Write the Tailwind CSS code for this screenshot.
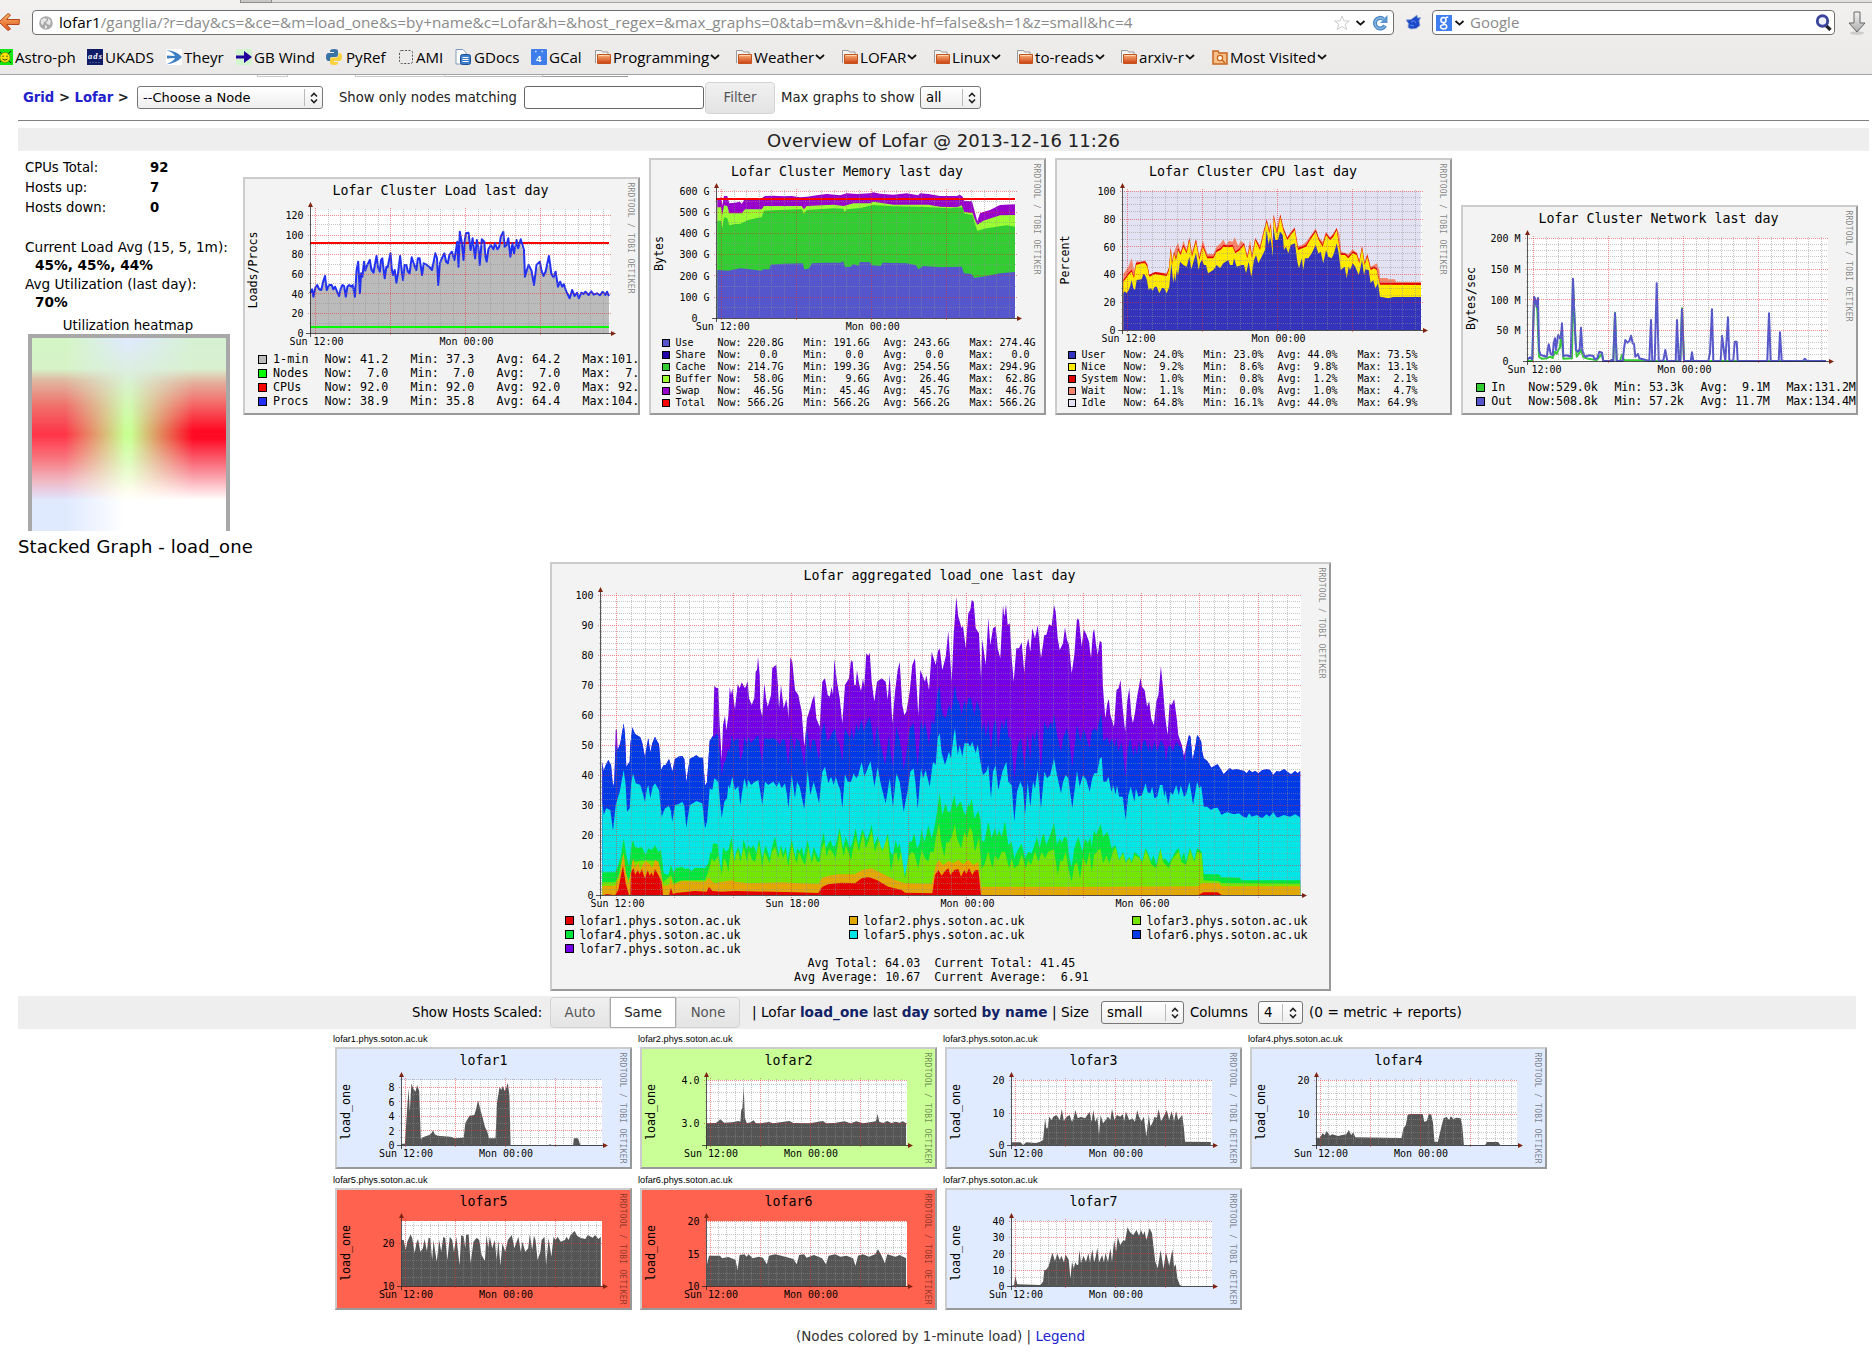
<!DOCTYPE html>
<html lang="en">
<head>
<meta charset="utf-8">
<title>Ganglia:: Lofar Cluster Report</title>
<script src="https://cdn.jsdelivr.net/npm/@tailwindcss/browser@4"></script>
</head>
<body class="w-[1872px] h-[1359px] overflow-hidden bg-white text-black text-[13.3px] leading-[17px] font-['DejaVu_Sans',sans-serif]">

<svg class="absolute w-0 h-0">
  <defs>
    <linearGradient id="fold" x1="0" y1="0" x2="0" y2="1"><stop offset="0" stop-color="#f8b27a"/><stop offset="1" stop-color="#cf3f10"/></linearGradient>
    <linearGradient id="back" x1="0" y1="0" x2="0" y2="1"><stop offset="0" stop-color="#f7b56c"/><stop offset="1" stop-color="#e2571c"/></linearGradient>
    <linearGradient id="down" x1="0" y1="0" x2="0" y2="1"><stop offset="0" stop-color="#f4f4f4"/><stop offset="1" stop-color="#aaa"/></linearGradient>
    <symbol id="folder" viewBox="0 0 16 16"><path d="M.5 14V1.500h6l1 1.500h5.500v2" fill="#f4f4f4" stroke="#9a9a9a"/><path d="M2.500 14.500v-9h13v9z" fill="url(#fold)" stroke="#c4541e"/><path d="M3.500 6.500h11" stroke="#fbd3ae"/></symbol>
    <symbol id="chev" viewBox="0 0 12 8"><path d="M2 2l4 3.600L10 2" fill="none" stroke="#111" stroke-width="1.800"/></symbol>
    <symbol id="updown" viewBox="0 0 8 12"><path d="M1 4.500L4 1.500 7 4.500M1 7.500l3 3 3-3" fill="none" stroke="#222" stroke-width="1.600"/></symbol>
  </defs>
</svg>

<!-- Browser toolbar -->
<header class="h-[75px] bg-gradient-to-b from-[#f2f1f0] to-[#ebe9e8] border-b border-[#a3a3a3] font-['Open_Sans','Noto_Sans',sans-serif]">
  <div class="flex h-[3px]">
    <div class="w-[240px]"></div>
    <div class="w-[32px] bg-[#c8c8c8] border-x border-b border-[#8b8b8b]"></div>
    <div class="flex-1 bg-[#e2e1e0] border-b border-[#a5a5a5]"></div>
  </div>
  <div class="flex h-[38px] pt-[7px]">
    <svg class="w-[21px] h-[20px] mt-[2px] mr-[11px] shrink-0" viewBox="0 0 21 20"><path d="M8 1.500L-1 10 8 18.500 10.500 17 6.500 12.500 19 12.500 19.500 7.500 6.500 7.500 10.500 3z" fill="url(#back)" stroke="#b5481a"/></svg>
    <div class="flex items-center w-[1362px] h-[25px] shrink-0 border border-[#6f6f6f] rounded-[4px] bg-white px-[6px]">
      <svg class="w-[14px] h-[14px] mr-[6px]" viewBox="0 0 14 14"><circle cx="7" cy="7" r="6.800" fill="#aaa"/><path d="M2 4l3-2 3 1-1 2-2 1-1 3-2-1zM9 2l3 3-1 4-3-1-1-2 2-1zM6 9l2 1v2l-2 1z" fill="#e6e6e6"/></svg>
      <span class="text-[15.3px] leading-[20px] text-[#8a8a8a] whitespace-nowrap pb-px"><span class="text-black">lofar1</span>/ganglia/?r=day&amp;cs=&amp;ce=&amp;m=load_one&amp;s=by+name&amp;c=Lofar&amp;h=&amp;host_regex=&amp;max_graphs=0&amp;tab=m&amp;vn=&amp;hide-hf=false&amp;sh=1&amp;z=small&amp;hc=4</span>
      <svg class="w-[16px] h-[16px] ml-auto" viewBox="0 0 16 16"><path d="M8 1l2 5h5.300l-4.200 3.300 1.600 5.200L8 11.400l-4.700 3.100 1.600-5.200L.700 6H6z" fill="#fff" stroke="#ccc"/></svg>
      <svg class="w-[13px] h-[8px] ml-[4px]"><use href="#chev"/></svg>
      <svg class="w-[16px] h-[16px] ml-[5px] -mr-[1px]" viewBox="0 0 16 16"><path d="M13 10.500A5.300 5.300 0 1 1 11.500 4" fill="none" stroke="#4b86c0" stroke-width="4"/><path d="M13 10.500A5.300 5.300 0 1 1 11.500 4" fill="none" stroke="#84b5e2" stroke-width="1.600"/><path d="M15.500 0V8H8z" fill="#5b95cd"/></svg>
    </div>
    <svg class="w-[16px] h-[16px] ml-[11px] mr-[11px] mt-[4px] shrink-0" viewBox="0 0 16 16"><path d="M1 6l5-.5L9.500 3 12 1l.5 3L15.500 3.500 14 7l1 4.500-4 3-5 .5-3-1.500 .5-4z" fill="#1b49c8" stroke="#8ea3d0" stroke-width=".8"/><path d="M6 8l3-1.500 2 2.500M5 11l4 1" stroke="#5e8bf5" fill="none"/></svg>
    <div class="flex items-center w-[403px] h-[25px] shrink-0 border border-[#6f6f6f] rounded-[4px] bg-white px-[3px]">
      <svg class="w-[16px] h-[16px]" viewBox="0 0 16 16"><rect width="16" height="16" fill="#3f7ef0"/><g fill="none" stroke="#fff" stroke-width="1.500"><circle cx="7.500" cy="5" r="2.600"/><path d="M10 2.300h2.200M8 7.700c-2 1 2.800 1.300 2.800 3.500 0 3.500-6.300 3.500-6.300.5 0-1.500 2-2.200 4-2"/></g></svg>
      <svg class="w-[13px] h-[8px] ml-[1px]"><use href="#chev"/></svg>
      <span class="ml-[4px] text-[15px] leading-[20px] pb-px text-[#8a8a8a]">Google</span>
      <svg class="w-[17px] h-[17px] ml-auto -mr-[1px]" viewBox="0 0 17 17"><path d="M10.500 11l5 5" stroke="#222" stroke-width="3.200"/><circle cx="7.500" cy="7" r="5.200" fill="#eef2fc" stroke="#3b459c" stroke-width="2.900"/></svg>
    </div>
    <svg class="w-[20px] h-[24px] ml-[12px] mt-[1px] shrink-0" viewBox="0 0 20 24"><ellipse cx="10" cy="22" rx="7" ry="1.700" fill="#ccc"/><path d="M7 1h6v11h5l-8 9-8-9h5z" fill="url(#down)" stroke="#666"/></svg>
  </div>
  <nav class="flex h-[32px] items-center text-[15.1px] whitespace-nowrap -ml-[3px] [&>a]:flex [&>a]:items-center [&>a]:shrink-0 [&>a>svg:first-child]:w-[16px] [&>a>svg:first-child]:h-[16px] [&>a>svg:first-child]:mr-[2px] [&_.c]:w-[12px] [&_.c]:h-[8px]">
    <a class="w-[90px]"><svg viewBox="0 0 16 16"><rect width="16" height="16" fill="#14e614"/><path d="M2 2l12 12M14 2L2 14" stroke="#222"/><circle cx="8" cy="8.500" r="5" fill="#ffe600" stroke="#7a6d00" stroke-width=".6"/><path d="M6 6.500v1.500M10 6.500v1.500M5.500 10q2.500 2.500 5 0" stroke="#333" fill="none"/></svg><span>Astro-ph</span></a>
    <a class="w-[79px]"><svg viewBox="0 0 16 16"><rect width="16" height="16" fill="#111c66"/><text x="1" y="9.500" font-family="Liberation Serif" font-size="8.500" font-style="italic" font-weight="bold" fill="#fff" textLength="14">ads</text><path d="M2 13.500h12" stroke="#42508c" stroke-dasharray="2 1"/></svg><span>UKADS</span></a>
    <a class="w-[70px]"><svg viewBox="0 0 16 16"><rect width="16" height="16" fill="#fff"/><path d="M0 1q11 1 16 7-5 6-16 7.500Q8 12 9 9L1 9.500v-3L9 7Q7 3 0 1z" fill="#3d7fc4"/></svg><span>Theyr</span></a>
    <a class="w-[90px]"><svg viewBox="0 0 16 16"><rect width="16" height="16" fill="#d2f5cf"/><path d="M0 6.500h8V2l8 6-8 6V9.500H0z" fill="#22009c"/></svg><span>GB Wind</span></a>
    <a class="w-[72px]"><svg viewBox="0 0 16 16"><path d="M8 0c3 0 4 .7 4 2.500V6q0 2-2 2H6Q4 8 4 10v2H2.500Q0 12 0 8t2.500-4H8V3H4V2q0-2 4-2z" fill="#3b72a5"/><path d="M8 16c-3 0-4-.7-4-2.500V10.500q0-2 2-2h4q2.500 0 2.500-2.500V4h1Q16 4 16 8t-2.500 4H8v1h4v1q0 2-4 2z" fill="#fcd13e"/></svg><span class="ml-[2px]">PyRef</span></a>
    <a class="w-[57px]"><svg viewBox="0 0 16 16"><rect x="1.500" y="1.500" width="13" height="13" rx="2" fill="none" stroke="#555" stroke-dasharray="2 1.500"/></svg><span>AMI</span></a>
    <a class="w-[76px]"><svg viewBox="0 0 16 16"><path d="M1 .5h7l3 3V15H1z" fill="#fff" stroke="#7f9ab8"/><rect x="5.500" y="5.500" width="10" height="10" rx="2" fill="#3c7ecb" stroke="#1d4f95"/><path d="M7.500 8.500h6M7.500 10.500h6M7.500 12.500h6" stroke="#fff"/></svg><span class="ml-[1px]">GDocs</span></a>
    <a class="w-[64px]"><svg viewBox="0 0 16 16"><rect width="16" height="16" rx="1" fill="#3f7eea"/><path d="M4 2.500h1.500M10.500 2.500H12" stroke="#cfe0ff" stroke-width="1.500"/><text x="5" y="13" font-family="Liberation Sans" font-size="9.500" font-weight="bold" fill="#fff">4</text></svg><span>GCal</span></a>
    <a class="w-[141px]"><svg><use href="#folder"/></svg><span>Programming</span><svg class="c"><use href="#chev"/></svg></a>
    <a class="w-[106px]"><svg><use href="#folder"/></svg><span>Weather</span><svg class="c"><use href="#chev"/></svg></a>
    <a class="w-[92px]"><svg><use href="#folder"/></svg><span>LOFAR</span><svg class="c"><use href="#chev"/></svg></a>
    <a class="w-[83px]"><svg><use href="#folder"/></svg><span>Linux</span><svg class="c"><use href="#chev"/></svg></a>
    <a class="w-[104px]"><svg><use href="#folder"/></svg><span>to-reads</span><svg class="c"><use href="#chev"/></svg></a>
    <a class="w-[91px]"><svg><use href="#folder"/></svg><span>arxiv-r</span><svg class="c"><use href="#chev"/></svg></a>
    <a class="w-[120px]"><svg viewBox="0 0 16 16"><path d="M1 15V2h5l1 2h8v11z" fill="#f7c08a" stroke="#c8661e" stroke-width="1.500"/><circle cx="8" cy="9" r="2.600" fill="#fff" stroke="#c8661e" stroke-width="1.300"/><path d="M10 11l3 3" stroke="#c8661e" stroke-width="1.500"/></svg><span>Most Visited</span><svg class="c"><use href="#chev"/></svg></a>
  </nav>
</header>

<main class="pl-[18px]">
  <!-- Lower edges of controls scrolled under the toolbar -->
  <div class="flex h-[2px] pl-[239px]">
    <div class="w-[31px] border-x border-b border-[#ccc]"></div><div class="w-[67px]"></div>
    <div class="w-[90px] border-x border-b border-[#ccc]"></div><div class="w-[98px] border-b border-r border-[#bbb]"></div><div class="w-[85px] border-b border-[#999]"></div>
  </div>

  <!-- Filter row -->
  <div class="flex items-center h-[41px] mb-[2px] pl-[5px] text-[#222] whitespace-nowrap">
    <div class="w-[114px] font-bold text-[13.2px] word-spacing"><span class="text-[#2222cc]">Grid</span> &gt; <span class="text-[#2222cc]">Lofar</span> &gt;</div>
    <div class="flex items-center w-[186px] h-[23px] border border-[#777] rounded-[3px] bg-gradient-to-b from-white to-[#eee] pl-[5px] text-black"><span class="text-[13px]">--Choose a Node</span><div class="ml-auto h-[17px] w-[18px] border-l border-[#bbb] flex items-center justify-center"><svg class="w-[8px] h-[12px]"><use href="#updown"/></svg></div></div>
    <span class="w-[185px] pl-[16px] text-[13.2px]">Show only nodes matching</span>
    <div class="ml-[16px] w-[180px] h-[23px] border border-[#666] rounded-[3px] bg-white"></div>
    <div class="ml-[1px] w-[70px] h-[32px] border border-[#d3d3d3] rounded-[4px] bg-gradient-to-b from-[#f0f0f0] to-[#e4e4e4] text-[#555] flex items-center justify-center">Filter</div>
    <span class="w-[140px] pl-[6px]">Max graphs to show</span>
    <div class="flex items-center w-[61px] h-[23px] border border-[#777] rounded-[3px] bg-gradient-to-b from-white to-[#eee] ml-[5px] pl-[5px] text-black"><span>all</span><div class="ml-auto h-[17px] w-[18px] border-l border-[#bbb] flex items-center justify-center"><svg class="w-[8px] h-[12px]"><use href="#updown"/></svg></div></div>
  </div>
  <div class="w-[1851px] h-px bg-[#808080]"></div>
  <h1 class="w-[1851px] h-[23px] mt-[7px] bg-[#eee] text-[18px] tracking-[0.06px] leading-[25px] text-center text-[#222]">Overview of Lofar @ 2013-12-16 11:26</h1>

  <!-- Summary and cluster graphs -->
  <section class="flex h-[380px] pt-[7px]">
    <div class="w-[225px] shrink-0 pl-[7px] whitespace-nowrap">
      <div class="grid grid-cols-[125px_1fr] auto-rows-[20px] leading-[19px] text-[13.2px]">
        <span>CPUs Total:</span><b>92</b><span>Hosts up:</span><b>7</b><span>Hosts down:</span><b>0</b>
      </div>
      <div class="mt-[20px] leading-[18px] h-[19px] text-[13.65px]">Current Load Avg (15, 5, 1m):</div>
      <div class="pl-[10px] font-bold leading-[16px] h-[17px] text-[13.65px]">45%, 45%, 44%</div>
      <div class="leading-[20px] text-[13.65px]">Avg Utilization (last day):</div>
      <div class="pl-[10px] font-bold leading-[16px] h-[17px] text-[13.65px]">70%</div>
      <div class="mt-[7px] w-[206px] text-center leading-[16px]">Utilization heatmap</div>
      <div class="ml-[3px] w-[202px] h-[197px] border-4 border-b-0 border-[#a8a8a8] relative bg-[linear-gradient(to_bottom,#e0eaff_0%,#dceee0_17%,#d4f6b8_32%,#c8ff90_50%,#e0fbc0_65%,#fffef0_80%,#fff_85%)]">
        <div class="absolute inset-0 bg-[linear-gradient(to_bottom,#d3f6c4_0%,#d6f3c8_16%,#e0b8a0_22%,#f0706c_35%,#ff3347_50%,#f87880_63%,#f0b8c4_74%,#e4dcf4_82%,#dfeaff_84%,#dfeaff_100%)] [mask-image:linear-gradient(to_right,#000_0%,#000_17%,#0000_48%)]"></div>
        <div class="absolute inset-0 bg-[linear-gradient(to_bottom,#d5f1d2_0%,#d9f0d0_16%,#e4b09c_23%,#f46a68_34%,#ff0a24_48%,#ff0a24_52%,#fa5868_62%,#f99aa4_71%,#ffe0e4_80%,#fff_84%)] [mask-image:linear-gradient(to_left,#000_0%,#000_17%,#0000_49%)]"></div>
      </div>
    </div>
    <div class="flex items-end gap-[9px] h-[257px]" id="cluster"></div>
  </section>

  <h2 class="text-[18px] tracking-[0.14px] leading-[22px] h-[31px] pt-[5px]">Stacked Graph - load_one</h2>
  <div class="pl-[532px] h-[429px]" id="stacked"></div>

  <!-- Host graph controls -->
  <div class="flex items-center w-[1838px] h-[33px] mt-[5px] pl-[394px] bg-[#eee] whitespace-nowrap">
    <span class="w-[138px]">Show Hosts Scaled:</span>
    <div class="flex h-[31px] text-[#555] [&>div]:flex [&>div]:items-center [&>div]:justify-center [&>div]:border">
      <div class="w-[60px] border-[#d3d3d3] rounded-l-[4px] bg-gradient-to-b from-[#f0f0f0] to-[#e4e4e4]">Auto</div>
      <div class="w-[66px] border-[#aaa] bg-white text-[#222]">Same</div>
      <div class="w-[64px] border-[#d3d3d3] rounded-r-[4px] bg-gradient-to-b from-[#f0f0f0] to-[#e4e4e4]">None</div>
    </div>
    <span class="w-[361px] pl-[12px] text-[13.7px]">| Lofar <b class="text-[#112266]">load_one</b> last <b class="text-[#112266]">day</b> sorted <b class="text-[#112266]">by name</b> | Size</span>
    <div class="flex items-center w-[83px] h-[23px] border border-[#777] rounded-[3px] bg-gradient-to-b from-white to-[#eee] pl-[5px]"><span>small</span><div class="ml-auto h-[17px] w-[18px] border-l border-[#bbb] flex items-center justify-center"><svg class="w-[8px] h-[12px]"><use href="#updown"/></svg></div></div>
    <span class="w-[74px] pl-[6px]">Columns</span>
    <div class="flex items-center w-[45px] h-[23px] border border-[#777] rounded-[3px] bg-gradient-to-b from-white to-[#eee] pl-[5px]"><span>4</span><div class="ml-auto h-[17px] w-[20px] border-l border-[#bbb] flex items-center justify-center"><svg class="w-[8px] h-[12px]"><use href="#updown"/></svg></div></div>
    <span class="pl-[6px] text-[13.7px]">(0 = metric + reports)</span>
  </div>

  <div class="grid grid-cols-[repeat(4,305px)] auto-rows-[141px] pl-[315px] pt-[4px] h-[293px]" id="hosts"></div>
  <footer class="text-[#333] pl-[778px] pt-[6px] text-[13.5px] whitespace-nowrap">(Nodes colored by 1-minute load) | <span class="text-[#2222cc]">Legend</span></footer>
</main>

<script>
const MONO = "'DejaVu Sans Mono', monospace";
const t = (x, y, s, adv, size, opt = '') =>
  `<text x="${x}" y="${y}" font-size="${size}" textLength="${(s.length * adv).toFixed(1)}" ${opt}>${s.replace(/ /g, '\u00a0')}</text>`;

// Sampled series: "x,y x,y ..." in a sample grid with origin (ox, oy) and kx/ky samples per pixel.
const pts = (s, ox, oy, kx = 3, ky = 3, dy = 0) => s.trim().split(/\s+/).map(p => {
  const [a, b] = p.split(',').map(Number);
  return [+(ox + a / kx).toFixed(1), +(oy + b / ky + dy).toFixed(1)];
});
const area = (p, base, fill) => `<polygon fill="${fill}" points="${p[0][0]},${base} ${p.join(' ')} ${p[p.length - 1][0]},${base}"/>`;
const line = (p, color, w = 2) => `<polyline fill="none" stroke="${color}" stroke-width="${w}" stroke-linejoin="round" points="${p.join(' ')}"/>`;

// card: box [x,y,w,h]; plot: x0, x1, top, base; ticks: [y, label]; vertical grid from gx with major/minor steps
function graph(c) {
  const [x, y, w, h] = c.box, {x0, x1, top, base} = c;
  let g = `<rect x="${x}" y="${y}" width="${w}" height="${h}" fill="${c.bg || '#f3f3f3'}"/>`;
  g += `<rect x="${x0}" y="${top}" width="${x1 - x0 + 1}" height="${base - top}" fill="#fff"/>` + c.draw;
  const n = Math.round(c.major / c.minor);
  let mn = '', mj = '';
  for (let k = -2; ; k++) {
    const gx = c.gx + k * c.minor;
    if (gx > x1) break;
    if (gx < x0 + 1) continue;
    const px = Math.floor(gx) + .5;
    if (k % n === 0) mj += `M${px} ${top - 2}V${base + 3}`; else mn += `M${px} ${top - 1}V${base + 1}`;
  }
  for (let gy = base - c.hminor; gy > top - 1; gy -= c.hminor) {
    if (c.ticks.some(k => Math.abs(k[0] - gy) < 1.5)) continue;
    mn += `M${x0 - 1} ${Math.floor(gy) + .5}H${x1 + 1}`;
  }
  c.ticks.forEach(([ty]) => { if (ty < base - 1) mj += `M${x0 - 2} ${Math.floor(ty) + .5}H${x1 + 2}`; });
  g += `<path d="${mn}" stroke="#8f8f8f" stroke-opacity=".5" stroke-dasharray="1 1" fill="none"/>`;
  g += `<path d="${mj}" stroke="#e03030" stroke-opacity=".55" stroke-dasharray="1 1" fill="none"/>`;
  g += `<path d="M${x0 + .5} ${top - 3}V${base + 4}M${x0 - 4} ${base + .5}H${x1 + 4}" stroke="#1f1f1f" stroke-opacity=".75" fill="none"/>`;
  g += `<path d="M${x0 - 2} ${top - 3}h5l-2.500-5zM${x1 + 2} ${base - 2}v5l5-2.500z" fill="#802411"/>`;
  c.ticks.forEach(([ty, l]) => { if (l) g += t(x0 - 6.5 - l.length * 6, ty + 3.7, l, 6, 10); });
  c.times.forEach(([tx, l]) => { g += t(tx + 1 - l.length * 3, base + 12, l, 6, 10); });
  g += t(x + w / 2 - c.title.length * 4 + (c.tdx || 0), y + 18, c.title, 8, 13.3);
  if (c.ylab) g += `<g transform="translate(${c.ylab[0]} ${c.ylab[1]}) rotate(-90)">${t(-c.ylab[2].length * 3.500, 0, c.ylab[2], 7, 11.7)}</g>`;
  g += `<g transform="translate(${x + w - 12.5} ${y + 5.500}) rotate(90)" fill="#000" fill-opacity=".48">${t(0, 0, 'RRDTOOL / TOBI OETIKER', 5.050, 8)}</g>`;
  g += c.extra || '';
  g += `<path d="M${x} ${y + h}V${y}H${x + w}L${x + w - 2} ${y + 2}H${x + 2}V${y + h - 2}z" fill="#ccc"/><path d="M${x} ${y + h}H${x + w}V${y}L${x + w - 2} ${y + 2}V${y + h - 2}H${x + 2}z" fill="#999"/>`;
  return `<svg class="block shrink-0" width="${w}" height="${h}" viewBox="${x} ${y} ${w} ${h}" font-family="${MONO}">${g}</svg>`;
}
const swatch = (x, y, s, c) => `<rect x="${x + .5}" y="${y + .5}" width="${s - 1}" height="${s - 1}" fill="${c}" stroke="#000"/>`;
const legend = (rows, y, step, sx, nx, cols, adv, size, ss) => rows.map((r, i) =>
  swatch(sx, y + i * step - ss + 1, ss, r[0]) + t(nx, y + i * step, r[1], adv, size) +
  cols.map((cx, j) => t(cx, y + i * step, r[2 + j], adv, size)).join('')).join('');
const DAY = (gx, p) => [[gx, 'Sun 12:00'], [gx + p, 'Mon 00:00']];

// --- Cluster load
const load = pts(`748,430 753,418 756,440 761,412 765,405 770,418 775,420 780,392 784,378 788,420 794,405 800,405 804,418 808,410 813,425 818,438 822,415 826,405 830,408 834,440 838,410 842,405 848,410 851,405 856,440 860,360 864,335 868,430 871,370 874,380 878,335 881,362 884,350 892,330 896,360 901,368 908,318 912,352 916,365 919,330 922,325 928,385 932,350 935,352 942,310 945,358 948,375 952,360 956,398 960,370 965,318 969,360 972,390 976,345 980,345 984,365 988,370 993,322 999,345 1004,360 1008,325 1012,325 1018,375 1022,340 1030,345 1036,352 1042,360 1050,310 1054,325 1057,405 1061,340 1064,330 1072,310 1076,335 1080,340 1084,315 1090,305 1096,330 1103,275 1106,350 1109,245 1114,280 1118,330 1121,270 1124,250 1130,248 1135,300 1140,265 1146,325 1150,270 1154,292 1157,345 1162,268 1168,275 1171,320 1174,335 1178,298 1184,285 1190,298 1194,280 1200,298 1204,290 1208,260 1214,245 1217,290 1222,285 1226,265 1231,320 1236,280 1240,310 1246,270 1250,295 1256,268 1264,300 1266,380 1271,360 1275,345 1282,362 1288,405 1294,345 1302,335 1306,362 1311,378 1316,365 1324,318 1330,372 1335,382 1340,365 1346,410 1351,395 1356,410 1360,402 1366,425 1374,445 1380,420 1386,438 1392,428 1396,445 1402,428 1408,432 1412,425 1420,435 1426,424 1432,434 1440,430 1447,436 1454,425 1460,435 1464,425 1469,438`, 0, 150, 2.412);
const lt = v => 333.3 - v * .983;
const gLoad = graph({box: [243, 177, 397, 238], x0: 310, x1: 609, top: 210, base: 333, gx: 315.5, major: 75, minor: 12.5, hminor: 9.83,
  ticks: [0, 20, 40, 60, 80, 100, 120].map(v => [lt(v), '' + v]), times: DAY(315.5, 150), title: 'Lofar Cluster Load last day', tdx: -1,
  ylab: [257, 270, 'Loads/Procs'],
  draw: area(load.map((p, i) => [p[0], (p[1] * 2 + load[Math.max(0, i - 1)][1] + load[Math.min(load.length - 1, i + 1)][1]) / 4]), 333, '#bbb') +
    `<path d="M310 327H609" stroke="#0f0" stroke-width="2"/><path d="M310 243H609" stroke="red" stroke-width="2"/>` + line(load, '#2030f4', 2),
  extra: legend([['#bbb', '1-min', 'Now: 41.2', 'Min: 37.3', 'Avg: 64.2', 'Max:101.7'], ['#0f0', 'Nodes', 'Now:  7.0', 'Min:  7.0', 'Avg:  7.0', 'Max:  7.0'], ['#f00', 'CPUs', 'Now: 92.0', 'Min: 92.0', 'Avg: 92.0', 'Max: 92.0'], ['#2030f4', 'Procs', 'Now: 38.9', 'Min: 35.8', 'Avg: 64.4', 'Max:104.3']],
    363, 14, 258, 273, [324.5, 410.5, 496.5, 582.5], 7.1, 11.7, 9)});

// --- Cluster memory
const m = s => pts(s, 640, 150);
const gMem = graph({box: [649, 158, 397, 257], x0: 716, x1: 1015, top: 191, base: 318, gx: 721.7, major: 75, minor: 12.5, hminor: 10.6,
  ticks: [0, 1, 2, 3, 4, 5, 6].map(v => [318.3 - v * 21.17, v ? v + '00 G' : '0  ']), times: DAY(721.7, 150), title: 'Lofar Cluster Memory last day', tdx: -.5,
  ylab: [663, 253.5, 'Bytes'],
  draw: area(m('232,150 243,142 247,165 252,138 262,138 268,160 285,158 300,155 305,162 312,150 330,148 365,145 375,138 400,137 430,139 455,138 480,142 500,140 530,136 560,132 600,136 620,130 650,132 690,130 700,127 720,131 760,134 800,130 835,136 840,130 865,132 900,138 950,138 960,134 968,140 972,152 996,154 1003,180 1012,214 1020,190 1030,186 1050,180 1080,165 1125,163'), 318, '#9900cc') +
    area(m('232,172 243,172 247,195 252,166 262,168 268,190 305,190 315,178 365,178 372,168 485,168 492,178 500,168 580,164 612,168 640,160 690,160 700,155 760,164 865,164 900,170 950,172 965,166 972,185 998,190 1003,205 1012,224 1030,212 1080,196 1125,195'), 318, '#99ff33') +
    area(m('232,212 243,212 247,235 252,202 262,205 268,226 285,222 300,222 325,210 350,204 365,202 372,182 410,180 485,178 492,192 500,180 580,175 610,176 614,186 620,178 660,174 700,165 760,169 830,170 870,172 930,175 968,172 972,190 998,196 1003,215 1012,242 1040,235 1070,230 1100,226 1125,230'), 318, '#33cc33') +
    area(m('232,360 265,362 300,355 330,358 365,362 370,358 388,358 392,344 430,341 488,340 493,358 505,356 512,348 515,340 560,338 600,338 610,334 615,352 632,350 640,342 655,348 660,336 690,337 695,346 722,348 728,338 800,340 828,346 835,358 850,348 900,352 965,350 972,370 995,372 1003,384 1040,378 1080,370 1125,366'), 318, '#5555cc') +
    '<path d="M716 199H1015" stroke="red" stroke-width="2"/>',
  extra: legend([['#5555cc', 'Use', 'Now: 220.8G', 'Min: 191.6G', 'Avg: 243.6G', 'Max: 274.4G'], ['#2200aa', 'Share', 'Now:   0.0 ', 'Min:   0.0 ', 'Avg:   0.0 ', 'Max:   0.0 '], ['#33cc33', 'Cache', 'Now: 214.7G', 'Min: 199.3G', 'Avg: 254.5G', 'Max: 294.9G'], ['#99ff33', 'Buffer', 'Now:  58.0G', 'Min:   9.6G', 'Avg:  26.4G', 'Max:  62.8G'], ['#9900cc', 'Swap', 'Now:  46.5G', 'Min:  45.4G', 'Avg:  45.7G', 'Max:  46.7G'], ['#ff0000', 'Total', 'Now: 566.2G', 'Min: 566.2G', 'Avg: 566.2G', 'Max: 566.2G']],
    346, 12, 662, 675.500, [717.5, 803.5, 883.5, 969.5], 6, 10, 8)});

// --- Cluster CPU
const nice = '220,395 228,385 235,375 240,370 245,365 252,385 258,345 275,340 285,340 292,350 298,380 315,372 350,378 357,360 362,300 366,345 372,310 378,330 384,300 392,315 400,290 410,310 418,270 426,320 438,275 448,330 458,290 472,325 490,325 500,305 512,300 520,290 535,292 548,290 556,310 570,300 582,285 592,325 600,290 606,325 616,270 630,300 640,255 650,215 658,250 662,230 668,290 671,200 680,250 685,235 691,200 700,240 712,270 722,255 734,240 744,300 756,295 768,290 780,270 797,245 806,270 818,290 828,255 840,270 850,260 860,240 868,290 872,315 885,315 895,325 908,310 920,315 928,340 936,295 944,345 952,320 962,360 972,355 980,360 990,404 1113,405';
const cp = (s, dy = 0) => pts(s, 1050, 150, 3, 3, dy);
const gCpu = graph({box: [1055, 158, 397, 257], x0: 1122, x1: 1421, top: 191, base: 330, gx: 1127.5, major: 75, minor: 12.5, hminor: 6.95,
  ticks: [0, 20, 40, 60, 80, 100].map(v => [330.3 - v * 1.39, '' + v]), times: DAY(1127.5, 150), title: 'Lofar Cluster CPU last day', tdx: -.5,
  ylab: [1069, 260, 'Percent'],
  draw: '<rect x="1123" y="191" width="298" height="139" fill="#e2e2f2"/>' +
    area(cp('220,372 235,350 245,325 252,360 260,332 275,338 285,330 292,342 298,376 320,366 350,370 357,350 362,290 368,330 374,300 384,278 392,305 400,272 410,298 418,262 426,305 438,266 448,318 458,270 472,312 490,312 500,290 512,280 520,268 528,285 537,272 548,275 554,262 565,288 572,272 582,280 592,315 600,270 606,310 616,264 630,285 640,245 650,208 658,235 662,215 668,280 671,192 680,235 691,192 700,230 712,262 722,245 734,232 744,288 756,285 768,276 780,260 797,235 806,262 818,275 828,245 840,262 850,250 860,234 868,252 874,305 895,312 908,298 920,308 928,330 936,288 944,335 952,310 962,350 972,345 980,340 988,360 990,384 1012,384 1015,388 1035,388 1038,396 1113,396'), 330, '#f4856a') +
    area(cp(nice, -1.9), 330, '#e20000') + area(cp(nice), 330, '#ffea00') +
    area(cp('220,430 224,424 230,430 235,422 240,410 245,390 250,415 255,420 260,390 275,388 280,372 285,376 290,388 296,420 302,415 308,422 314,410 320,410 328,430 336,414 342,414 350,430 358,410 364,340 370,400 373,372 376,395 380,360 384,375 390,335 400,345 410,350 418,320 424,358 438,310 446,360 450,340 456,330 462,345 468,345 474,370 490,360 500,345 510,355 520,340 535,330 540,345 548,345 552,325 560,350 575,345 582,345 588,370 596,335 604,380 612,330 618,315 625,340 635,320 640,310 645,300 650,240 656,285 660,260 664,280 668,320 670,230 676,270 684,270 690,245 698,255 702,300 708,290 715,310 722,285 735,280 742,335 747,355 755,325 760,360 765,325 775,325 785,310 797,285 805,310 812,305 820,340 828,300 835,320 845,325 852,310 860,280 866,310 872,360 884,350 890,385 896,350 900,360 908,340 916,350 926,375 930,360 936,330 942,375 946,358 956,360 962,400 970,390 976,415 984,400 990,440 1015,445 1030,441 1113,441'), 330, '#3333bb'),
  extra: legend([['#3333bb', 'User', 'Now: 24.0%', 'Min: 23.0%', 'Avg: 44.0%', 'Max: 73.5%'], ['#ffea00', 'Nice', 'Now:  9.2%', 'Min:  8.6%', 'Avg:  9.8%', 'Max: 13.1%'], ['#dd0000', 'System', 'Now:  1.0%', 'Min:  0.8%', 'Avg:  1.2%', 'Max:  2.1%'], ['#f4856a', 'Wait', 'Now:  1.1%', 'Min:  0.0%', 'Avg:  1.0%', 'Max:  4.7%'], ['#e2e2f2', 'Idle', 'Now: 64.8%', 'Min: 16.1%', 'Avg: 44.0%', 'Max: 64.9%']],
    358, 12, 1068, 1081.5, [1123.5, 1203.5, 1277.5, 1357.5], 6, 10, 8)});

// --- Cluster network
const nw = s => pts(s, 1450, 150);
const gNet = graph({box: [1461, 205, 397, 210], x0: 1527, x1: 1827, top: 238, base: 361, gx: 1533.5, major: 75, minor: 12.5, hminor: 6.15,
  ticks: [0, 50, 100, 150, 200].map(v => [361.3 - v * .615, v ? v + ' M' : '0  ']), times: DAY(1533.5, 150), title: 'Lofar Cluster Network last day', tdx: -1,
  ylab: [1475, 298.500, 'Bytes/sec'],
  draw: line(nw('233,632 247,632 252,450 257,455 262,480 267,620 275,626 290,625 300,620 308,624 315,605 320,612 325,600 330,592 334,545 340,626 366,625 369,400 376,560 380,620 386,612 393,600 400,622 415,626 440,630 455,612 460,633 490,633 495,488 500,633 510,633 516,614 522,630 580,631 598,633 691,633 696,475 702,633 1128,633'), '#33cc33', 2) +
    line(nw('233,628 240,622 247,628 252,440 256,448 260,470 264,444 267,600 272,615 290,620 296,583 302,612 308,615 311,580 315,565 318,600 322,570 325,555 330,565 333,560 336,520 340,618 350,616 362,620 366,480 369,386 373,490 378,600 384,605 389,598 393,533 397,600 402,614 406,620 418,616 430,618 434,628 442,625 448,605 456,608 460,633 480,633 484,630 490,633 495,490 500,633 518,633 523,590 526,570 532,578 538,574 543,557 548,580 552,582 556,620 564,612 568,625 598,633 603,510 607,633 614,632 620,400 626,632 640,632 646,600 652,633 677,633 681,510 686,633 691,633 696,478 702,633 722,633 726,607 730,633 775,633 780,608 786,478 790,633 812,632 816,557 822,605 826,632 834,502 838,632 850,632 854,575 860,575 863,633 952,633 957,490 962,633 986,633 990,547 995,633 1060,632 1064,626 1070,632 1128,633'), '#5555cc', 2),
  extra: legend([['#33cc33', 'In', 'Now:529.0k', 'Min: 53.3k', 'Avg:  9.1M', 'Max:131.2M'], ['#5555cc', 'Out', 'Now:508.8k', 'Min: 57.2k', 'Avg: 11.7M', 'Max:134.4M']],
    391, 14, 1476, 1491.3, [1528.3, 1614.4, 1700.4, 1786.4], 6.95, 11.7, 9)});
document.getElementById('cluster').innerHTML = gLoad + gMem + gCpu + gNet;

// --- Stacked graph: first part sampled at 3/px, tail at 1.96/px
const st = (a, b) => [...pts(a, 595, 585), ...pts(b, 540, 555, 1.96)];
const tail = '1272,540 1275,545 1279,615 1284,580 1288,540 1292,548 1296,560 1298,590 1301,610 1308,618 1316,638 1322,632 1328,628 1333,640 1340,658 1346,648 1352,640 1358,645 1365,642 1372,645 1380,648 1385,655 1390,645 1396,652 1402,648 1408,655 1416,645 1425,643 1431,645 1437,660 1444,648 1450,650 1458,642 1465,650 1472,658 1480,648 1485,655 1490,648';
const start = '22,530 26,560 30,545 40,525 48,540 54,605 58,590 ';
const low = '76,475 86,415 90,450 94,545 104,530 106,480 112,427 120,447 136,457 142,475 150,517 156,480 160,460 166,502 172,475 180,455 186,468 192,478 198,555 206,540 212,540 222,522 226,535 232,560 240,522 250,515 262,513 268,522 274,592 284,522 296,515 304,511 314,518 324,518 330,602 336,592 344,467 354,452 ';
const purple = st(start + '62,435 65,432 68,495 ' + low + '358,302 363,308 370,310 374,420 380,525 384,420 390,392 394,435 400,395 404,305 408,330 412,310 416,345 420,372 428,297 434,310 440,292 450,310 454,300 458,288 462,340 470,360 478,340 482,260 486,255 489,215 494,270 496,370 502,395 508,295 514,345 518,365 528,330 532,248 544,240 548,290 552,370 558,300 566,370 574,342 578,370 580,402 586,217 592,230 600,315 610,330 620,380 628,485 636,400 646,370 652,345 658,330 664,400 674,425 682,290 690,280 698,330 704,335 710,305 714,330 718,222 726,290 734,340 742,415 750,300 762,280 768,225 773,230 778,300 782,300 786,255 792,295 798,318 804,280 808,305 814,205 820,212 824,203 830,290 838,350 846,290 860,280 872,290 878,345 884,268 892,415 900,320 908,255 914,230 922,360 928,390 934,380 944,320 952,240 960,220 970,390 976,255 990,290 994,270 1002,315 1010,200 1022,240 1028,200 1034,190 1042,255 1052,215 1060,138 1064,200 1070,290 1076,150 1084,35 1090,95 1100,130 1104,122 1112,190 1120,85 1126,75 1130,45 1136,50 1142,130 1152,145 1158,280 1162,163 1172,240 1180,98 1186,180 1194,130 1202,124 1208,190 1216,220 1224,60 1228,95 1233,58 1238,120 1244,115 1250,220 1256,290 1264,190 1272,190 1280,172 1288,265 1294,185 1300,160 1306,200 1312,130 1320,160 1328,120 1338,220 1348,150 1354,150 1362,118 1370,122 1377,60 1382,80 1388,160 1394,195 1404,175 1410,127 1416,165 1422,180 1430,265 1438,210 1446,100 1452,105 1460,185 1466,133 1474,148 1482,170 1488,220 1494,140', '1086,222 1090,270 1093,300 1097,258 1101,262 1103,390 1108,490 1112,445 1115,432 1118,480 1125,515 1130,405 1134,400 1138,375 1142,460 1147,530 1151,440 1155,398 1159,480 1162,505 1166,475 1170,430 1177,368 1180,395 1185,405 1190,455 1194,438 1198,490 1203,510 1208,440 1212,420 1217,333 1221,400 1225,480 1230,540 1234,445 1238,450 1243,432 1248,490 1251,540 1258,570 1262,602 1267,570 ' + tail);
const blue = st(start + '62,480 68,495 ' + low + '358,460 364,445 370,455 376,520 380,570 386,535 392,525 400,490 404,500 410,450 416,470 422,465 430,460 436,530 444,500 448,455 456,480 460,455 468,475 480,460 490,450 496,500 502,535 508,460 520,462 535,460 545,465 555,480 562,462 570,465 580,540 588,440 598,500 604,460 614,470 622,510 628,545 636,430 646,500 652,465 660,465 672,525 680,440 688,412 696,470 705,460 710,445 720,430 726,465 734,480 742,530 750,430 760,450 766,460 770,430 776,470 784,415 790,440 800,402 806,440 812,420 824,395 832,440 838,490 846,420 856,475 862,500 870,540 882,450 888,510 894,545 904,425 912,455 920,500 926,555 936,490 944,430 956,415 962,480 968,545 978,405 984,435 990,412 1002,480 1010,405 1018,420 1026,330 1034,302 1038,365 1044,390 1052,400 1062,360 1070,380 1080,298 1086,345 1092,350 1100,390 1108,345 1114,370 1120,340 1128,340 1138,390 1146,345 1156,380 1160,440 1168,410 1172,460 1180,405 1188,500 1194,430 1202,400 1210,490 1220,405 1226,435 1234,395 1240,455 1248,460 1258,585 1268,480 1278,460 1284,510 1288,550 1298,445 1306,525 1312,445 1320,470 1326,428 1332,490 1338,550 1348,410 1358,435 1368,410 1372,430 1377,385 1386,450 1398,500 1404,460 1416,430 1422,460 1432,545 1446,418 1456,470 1466,430 1474,460 1484,490 1490,440 1498,430', '1092,530 1096,500 1100,473 1104,560 1112,545 1116,570 1121,548 1126,575 1130,548 1133,590 1140,560 1143,600 1148,665 1152,580 1157,550 1163,605 1166,570 1170,600 1174,558 1178,590 1182,560 1187,555 1192,590 1195,560 1199,590 1204,558 1210,590 1217,555 1224,575 1227,620 1231,575 1236,570 1240,590 1247,560 1252,570 1258,580 1263,620 1268,575 ' + tail);
const cyan = st('22,650 26,690 34,670 46,675 54,738 62,660 74,620 86,555 92,600 96,680 104,670 108,600 114,565 122,595 136,600 143,625 150,650 156,610 160,600 166,640 173,605 180,595 192,615 200,695 210,670 222,663 227,675 232,710 240,660 250,658 262,650 268,662 274,728 284,660 294,655 304,648 322,655 330,730 336,710 344,610 352,615 358,580 370,590 374,640 380,700 388,650 396,640 400,600 404,610 412,575 420,615 430,602 436,660 444,605 448,580 456,610 460,585 468,600 480,590 490,585 496,620 502,660 510,590 520,600 535,590 545,605 552,590 560,610 570,595 576,630 580,670 590,568 600,640 606,590 614,605 622,645 628,672 638,555 646,630 656,590 664,620 672,655 682,560 690,545 700,595 708,575 716,600 722,575 730,600 736,615 742,670 750,568 758,590 768,590 776,565 784,580 790,570 800,530 808,575 820,545 826,528 832,560 838,605 848,545 856,590 864,625 872,655 884,580 894,665 904,565 914,590 926,680 938,615 946,560 956,550 962,600 968,672 978,550 984,580 992,555 1004,605 1014,530 1022,540 1028,460 1034,445 1040,505 1050,540 1056,520 1062,500 1068,520 1076,450 1080,430 1088,510 1094,480 1102,515 1108,475 1120,475 1126,485 1132,470 1142,505 1148,478 1156,530 1164,570 1174,560 1180,540 1188,640 1194,560 1202,540 1210,615 1222,560 1234,530 1240,590 1250,600 1258,710 1266,620 1276,590 1284,610 1290,690 1298,590 1306,665 1314,590 1320,610 1328,555 1338,670 1348,560 1356,580 1366,570 1377,520 1386,570 1398,625 1404,590 1412,570 1420,580 1432,670 1446,558 1454,605 1464,570 1474,585 1484,620 1492,580 1498,565', '1092,655 1097,612 1101,605 1104,680 1110,680 1114,665 1120,710 1124,690 1128,720 1131,690 1135,725 1142,725 1148,795 1153,720 1158,695 1165,740 1168,700 1173,725 1180,720 1187,685 1191,712 1196,715 1200,695 1204,730 1210,725 1215,690 1220,690 1224,725 1226,705 1231,750 1236,710 1240,720 1247,690 1252,720 1256,690 1262,725 1266,720 1273,680 1280,750 1288,680 1292,700 1296,692 1301,755 1308,755 1315,765 1320,760 1328,758 1336,780 1341,775 1347,772 1360,778 1370,775 1378,785 1385,788 1390,775 1395,785 1405,780 1415,790 1424,778 1430,785 1437,772 1445,788 1458,780 1470,785 1480,778 1490,787');
const green = st('22,862 60,862 66,850 76,820 86,760 94,810 102,845 108,790 114,765 120,785 132,790 140,785 152,810 160,790 170,795 180,780 190,800 198,795 206,865 220,870 228,840 236,865 242,850 260,845 270,852 280,850 290,858 300,848 330,850 340,835 346,800 350,805 354,775 368,778 378,860 384,785 392,800 400,795 410,755 418,825 424,800 430,785 440,820 445,762 456,795 460,780 468,790 476,780 484,805 492,762 502,820 512,780 524,820 530,790 540,755 552,810 558,780 565,805 572,785 578,825 590,763 602,820 606,790 614,800 620,785 626,815 638,765 648,825 656,785 666,810 672,820 678,780 686,742 692,790 700,775 706,765 714,785 722,780 734,730 744,790 752,755 764,790 772,775 782,728 790,780 802,733 815,765 822,750 830,718 838,780 848,755 856,785 866,795 878,745 886,800 894,810 902,765 908,790 914,775 928,870 938,850 942,770 950,770 958,745 966,790 974,775 980,733 988,770 994,750 1000,720 1010,760 1018,730 1026,680 1034,625 1042,690 1052,655 1058,680 1066,680 1078,630 1084,670 1092,655 1098,650 1106,680 1112,690 1120,655 1124,665 1130,638 1138,700 1150,678 1156,700 1160,765 1168,770 1180,710 1190,760 1200,728 1206,755 1212,735 1220,755 1230,708 1240,780 1250,770 1258,820 1266,800 1280,775 1290,820 1300,800 1310,805 1320,775 1326,755 1334,790 1340,760 1346,745 1354,780 1360,765 1366,750 1377,713 1386,780 1394,760 1400,775 1408,755 1416,760 1422,810 1430,845 1438,790 1450,755 1462,800 1470,760 1478,775 1486,755 1490,785 1497,735', '1090,840 1099,808 1104,845 1112,830 1117,855 1120,880 1128,870 1132,895 1135,915 1143,890 1148,920 1155,905 1160,920 1165,890 1175,905 1180,920 1187,878 1193,900 1198,920 1202,900 1208,930 1216,878 1221,915 1226,910 1232,925 1240,905 1247,885 1252,880 1257,915 1262,890 1266,920 1274,878 1282,915 1288,880 1297,890 1301,958 1330,958 1336,966 1370,968 1376,976 1490,976');
const lime = st('22,892 60,892 72,870 82,820 86,800 92,860 100,885 106,870 112,830 152,826 190,828 204,892 228,870 236,894 260,886 330,885 338,865 346,838 350,820 358,830 370,812 380,870 386,820 394,830 400,860 406,805 410,780 418,830 424,805 430,795 436,830 446,785 456,830 462,795 472,825 480,830 492,773 502,850 508,800 516,815 524,835 530,800 540,785 550,820 556,790 564,820 572,798 580,845 590,775 604,835 612,800 622,825 630,840 640,785 650,835 658,805 666,830 674,830 680,790 688,770 695,815 702,790 712,800 722,820 728,780 734,742 746,815 752,780 760,800 768,825 776,780 782,755 792,800 804,742 812,790 822,765 830,738 840,800 852,765 862,800 870,775 878,755 888,860 896,810 904,800 910,830 918,800 930,880 940,815 950,800 958,805 970,850 980,795 990,820 1000,830 1006,800 1016,800 1022,760 1032,715 1038,770 1048,815 1054,770 1060,775 1070,755 1080,718 1086,760 1098,790 1108,740 1116,760 1124,725 1132,740 1140,800 1152,755 1160,850 1168,840 1180,798 1192,850 1200,810 1210,825 1220,800 1230,800 1242,850 1250,820 1258,850 1270,840 1280,808 1292,850 1300,825 1308,840 1320,798 1330,830 1340,800 1350,820 1360,800 1377,793 1388,870 1396,825 1402,830 1412,800 1420,850 1430,890 1438,840 1446,830 1455,880 1464,815 1474,840 1484,800 1490,860 1497,810', '1098,880 1104,925 1110,900 1116,925 1122,895 1128,875 1132,900 1135,915 1143,895 1148,925 1155,908 1160,925 1165,900 1175,908 1180,925 1187,885 1193,905 1198,928 1208,940 1216,883 1221,920 1232,940 1240,910 1252,888 1257,920 1266,930 1274,883 1282,920 1288,890 1297,895 1301,976 1330,978 1336,984 1490,986');
const orange = st('22,903 60,902 72,880 82,820 86,808 92,860 100,895 106,870 112,830 116,820 120,850 130,832 136,855 142,840 152,828 165,838 172,850 180,825 190,830 198,860 204,902 222,900 228,878 234,900 260,888 330,890 342,878 352,890 360,895 380,890 412,886 420,890 460,895 560,892 670,897 682,878 700,872 730,868 780,868 800,855 830,850 860,865 900,885 930,895 1010,896 1022,840 1032,825 1045,840 1060,828 1075,835 1090,825 1105,838 1120,825 1135,840 1150,830 1158,905 1500,905', '1290,994 1297,984 1330,984 1336,994 1490,994');
const red = st('22,931 36,927 60,931 70,915 78,870 84,842 92,895 102,931 106,931 108,860 116,850 120,870 128,855 134,868 140,852 146,870 150,880 158,855 164,872 170,862 174,875 180,852 190,870 200,890 204,931 222,931 228,908 234,928 242,924 300,918 335,920 342,905 352,918 380,920 420,918 600,922 670,924 682,905 700,898 740,893 780,895 800,880 820,876 845,885 880,905 920,915 930,923 1012,925 1020,870 1030,855 1040,872 1050,858 1060,850 1066,870 1078,855 1090,852 1098,875 1108,855 1114,868 1122,850 1132,870 1140,856 1150,855 1158,931', '1290,1021 1300,1012 1328,1012 1336,1020 1490,1020');
let ex = '';
[['#e20000', 0, 0], ['#e2a800', 1, 0], ['#73e600', 2, 0], ['#00e63a', 0, 1], ['#00e6e6', 1, 1], ['#003ae6', 2, 1], ['#7300e6', 0, 2]].forEach(([c, col, row], i) => {
  const bx = [565, 849, 1132][col], y = 925 + row * 14;
  ex += swatch(bx, 916 + row * 14, 9, c) + t(bx + 14.5, y, `lofar${i + 1}.phys.soton.ac.uk`, 7, 11.7);
});
ex += t(807.5, 967, 'Avg Total: 64.03  Current Total: 41.45', 7.05, 11.7) + t(794, 981, 'Avg Average: 10.67  Current Average:  6.91', 7.02, 11.7);
document.getElementById('stacked').innerHTML = graph({box: [550, 562, 781, 429], x0: 600, x1: 1300, top: 595, base: 895, gx: 616.5, major: 58.33, minor: 14.583, hminor: 6,
  ticks: [0, 10, 20, 30, 40, 50, 60, 70, 80, 90, 100].map(v => [895.3 - v * 3, '' + v]),
  times: [[616.5, 'Sun 12:00'], [791.5, 'Sun 18:00'], [966.5, 'Mon 00:00'], [1141.5, 'Mon 06:00']], title: 'Lofar aggregated load_one last day', tdx: -1,
  draw: area(purple, 895, '#7300e6') + area(blue, 895, '#003ae6') + area(cyan, 895, '#00e6e6') + area(green, 895, '#00e63a') + area(lime, 895, '#73e600') + area(orange, 895, '#e2a800') + area(red, 895, '#e20000'), extra: ex});

// --- Host graphs
const B = '#e1ebff', R = '#ff634f', G = '#caff98';
const hosts = [
  [B, 320, [[0, '0'], [14.5, '2'], [29, '4'], [43.500, '6'], [58, '8']], 7.25, '200,476 208,476 213,380 217,310 220,380 224,295 228,310 234,320 238,300 243,318 247,462 255,455 268,450 273,445 277,436 281,448 288,452 320,455 330,460 352,458 356,415 366,392 378,390 383,370 387,345 392,370 398,395 404,425 410,440 414,460 430,460 434,350 440,305 444,315 448,302 452,318 456,310 460,293 464,330 467,481 560,480 564,478 568,481 620,481 622,460 632,460 637,478 640,481 691,481'],
  [G, 320, [[21.7, '3.0'], [65, '4.0']], 8.67, '947,415 970,414 981,403 990,413 1010,412 1025,408 1030,410 1032,375 1035,370 1038,305 1041,400 1046,415 1055,412 1062,406 1068,415 1080,415 1100,411 1110,415 1150,408 1160,414 1200,415 1232,408 1240,415 1260,414 1285,409 1300,415 1314,409 1330,415 1355,410 1362,408 1366,387 1370,410 1380,414 1390,408 1400,414 1410,410 1420,413 1428,409 1436,415'],
  [B, 930, [[0, '0'], [32.300, '10'], [65, '20']], 6.5, '200,472 222,472 228,480 236,472 260,474 270,470 277,465 282,400 285,430 288,430 292,395 298,405 302,395 310,390 318,405 323,372 328,408 335,395 342,390 348,410 352,400 356,375 362,400 370,395 380,400 391,380 396,410 400,375 405,410 410,395 414,450 418,390 424,415 430,405 436,395 442,405 446,372 452,405 458,390 466,395 472,388 476,408 480,380 488,405 496,400 502,410 508,375 512,395 518,408 524,395 530,455 536,390 540,425 546,410 550,395 556,400 560,372 566,408 572,395 580,376 586,405 592,378 598,408 603,378 608,405 618,390 622,430 625,470 688,471'],
  [B, 930, [[31, '10'], [65, '20']], 6.5, '947,458 955,458 962,445 967,450 972,438 980,452 985,448 1000,453 1010,450 1020,448 1026,435 1032,450 1037,442 1042,457 1155,459 1160,430 1166,420 1170,390 1176,387 1207,387 1211,410 1217,408 1222,388 1228,388 1232,412 1236,470 1244,471 1252,430 1258,400 1266,396 1272,405 1276,393 1282,402 1290,398 1300,400 1304,420 1308,481 1360,481 1364,471 1392,471 1397,480 1440,481'],
  [R, 320, [[0, '10'], [43, '20']], 8.6, '200,765 205,765 210,795 214,770 222,748 226,760 232,805 236,775 240,762 246,800 252,790 256,762 262,798 266,758 270,760 275,825 278,765 286,830 292,765 297,800 302,755 307,760 312,825 318,755 324,765 328,800 334,755 342,840 346,750 352,755 356,790 358,750 364,748 369,835 376,770 384,758 390,765 396,810 404,828 408,750 412,790 416,755 422,790 428,765 433,825 437,765 442,842 447,775 454,800 460,765 470,750 476,790 486,755 492,800 496,770 503,800 510,790 514,748 520,795 524,752 528,765 533,825 540,800 543,765 550,755 554,840 560,760 567,815 572,755 577,765 582,755 590,770 600,765 604,755 609,765 614,750 624,738 630,752 638,758 650,762 656,750 668,758 674,750 682,762 688,755'],
  [R, 320, [[0, '10'], [32.500, '15'], [65, '20']], 6.5, '948,840 953,812 980,812 985,820 1000,816 1018,824 1023,855 1028,810 1040,808 1045,815 1050,808 1060,820 1075,815 1085,818 1095,838 1100,812 1115,808 1130,812 1160,822 1168,838 1174,810 1186,808 1192,818 1210,810 1230,820 1240,838 1246,812 1262,808 1275,815 1290,812 1306,820 1312,842 1318,812 1330,808 1345,815 1360,808 1367,793 1376,812 1384,835 1390,808 1410,815 1420,810 1436,820'],
  [B, 930, [[0, '0'], [16.25, '10'], [32.5, '20'], [48.75, '30'], [65, '40']], 8.125, '200,902 206,900 209,873 214,898 270,900 277,890 280,855 284,855 290,845 294,828 300,803 306,828 312,806 318,825 322,812 328,832 332,808 340,825 344,882 348,830 352,850 356,832 360,840 363,840 366,795 370,835 376,812 382,830 388,805 392,832 398,793 402,832 406,815 410,788 414,832 422,810 426,832 430,805 436,830 442,790 446,830 451,765 456,800 460,755 466,780 474,765 478,768 484,726 490,742 498,750 506,735 512,752 517,735 522,750 526,738 530,765 538,730 544,745 548,790 552,830 558,850 565,795 572,852 578,800 586,842 594,793 598,845 602,838 606,880 612,900 618,903 690,904']
];
document.getElementById('hosts').innerHTML = hosts.map(([bg, ox, ticks, hm, data], i) => {
  const col = i % 4, row = i >> 2, x = 335 + 305 * col, y = 1047 + 141 * row, base = 1145 + 141 * row, x0 = 401 + 305 * col;
  return `<div><div class="text-[9.2px] leading-[10px] h-[14px] pt-px whitespace-nowrap text-black font-['Liberation_Sans',sans-serif]">lofar${i + 1}.phys.soton.ac.uk</div><div class="pl-[2px]">` +
    graph({box: [x, y, 297, 122], bg, x0, x1: x0 + 200, top: base - 65, base, gx: x0 + 4.300, major: 50, minor: 8.333, hminor: hm,
      ticks: ticks.map(([d, l]) => [base + .3 - d, l]), times: DAY(x0 + 4, 100), title: 'lofar' + (i + 1), ylab: [x + 14.5, y + 65, 'load_one'],
      draw: area(pts(data, ox, 985, 2.45), base, '#555')}) + '</div></div>';
}).join('');
</script>
</body>
</html>
